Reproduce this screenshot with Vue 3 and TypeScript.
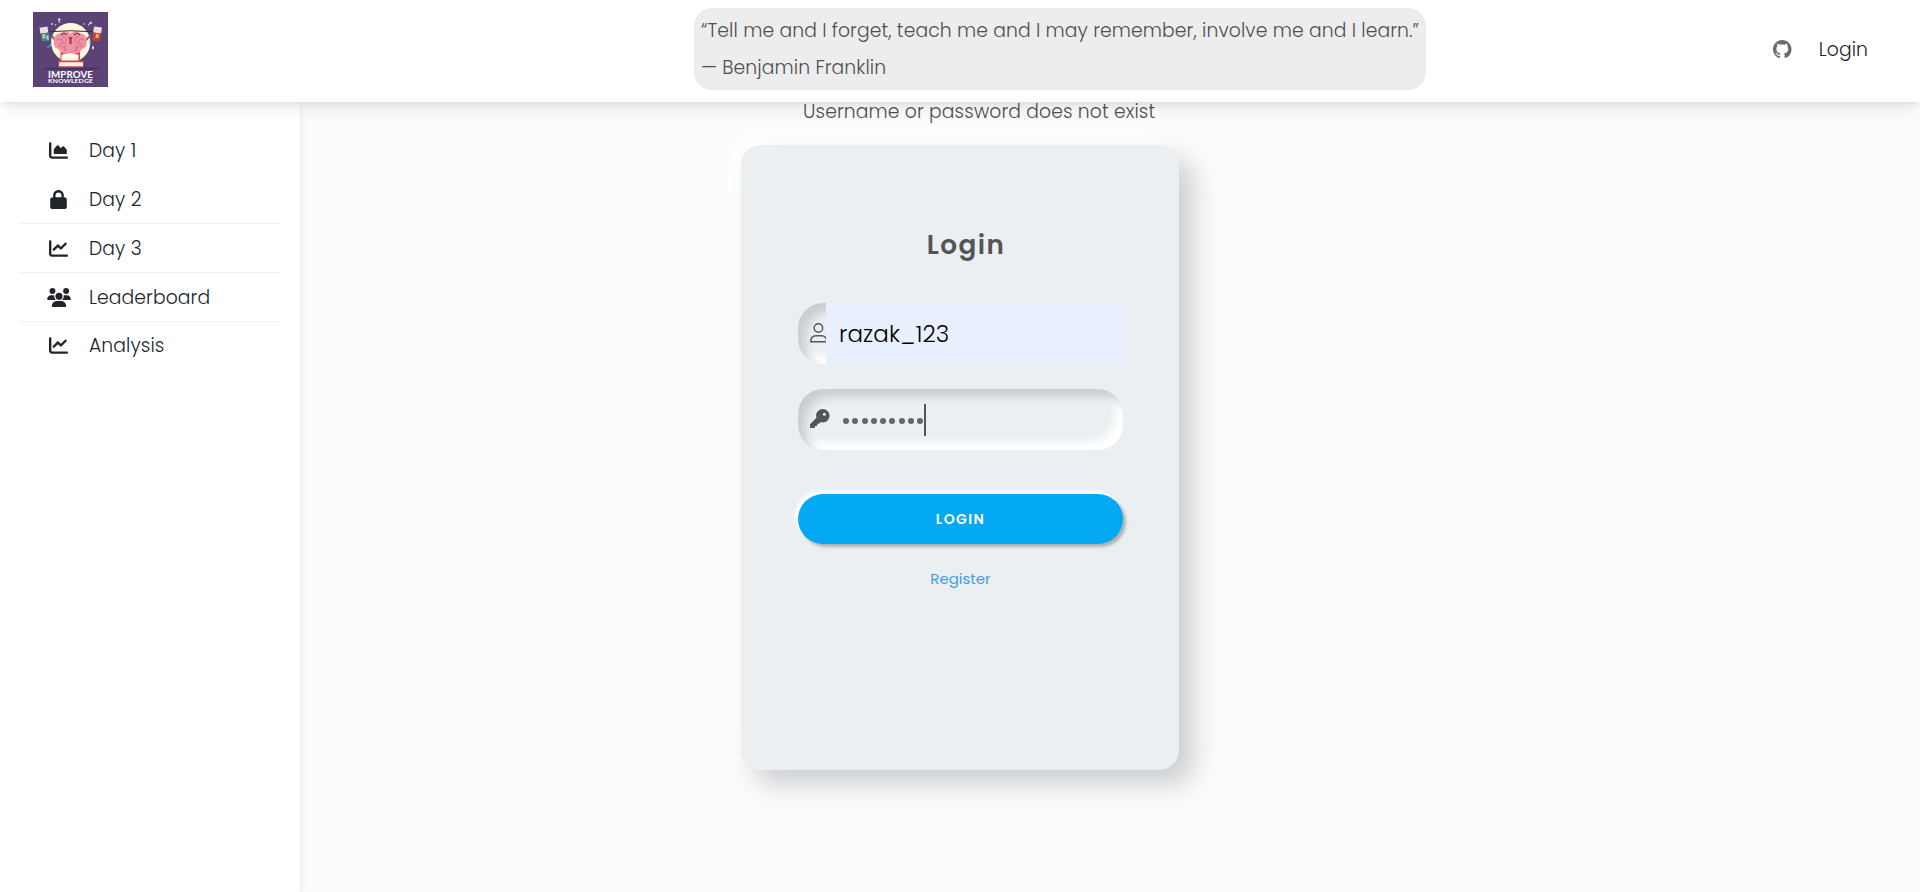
<script setup lang="ts">
interface NavItem {
  label: string
  box: string
  width: number
  path: string
  divider: boolean
}

const axis =
  'M64 64c0-17.7-14.3-32-32-32S0 46.3 0 64V400c0 44.2 35.8 80 80 80H480c17.7 0 32-14.3 32-32s-14.3-32-32-32H80c-8.8 0-16-7.2-16-16V64z'
const line =
  axis +
  'm406.6 86.6c12.5-12.5 12.5-32.8 0-45.3s-32.8-12.5-45.3 0L320 210.7l-57.4-57.4c-12.5-12.5-32.8-12.5-45.3 0l-112 112c-12.5 12.5-12.5 32.8 0 45.3s32.8 12.5 45.3 0L240 221.3l57.4 57.4c12.5 12.5 32.8 12.5 45.3 0l128-128z'
const area =
  axis +
  'm96 288H448c17.7 0 32-14.3 32-32V251.8c0-7.6-2.7-15-7.7-20.8l-65.8-76.8c-12.1-14.2-33.7-15-46.9-1.8l-21 21c-10 10-26.4 9.2-35.4-1.6l-39.2-47c-12.6-15.1-35.7-15.4-48.7-.6L135.9 215c-5.1 5.8-7.9 13.3-7.9 21.1v84c0 17.7 14.3 32 32 32z'
const lock =
  'M144 144v48H304V144c0-44.2-35.8-80-80-80s-80 35.8-80 80zM80 192V144C80 64.5 144.5 0 224 0s144 64.5 144 144v48h16c35.3 0 64 28.7 64 64V448c0 35.3-28.7 64-64 64H64c-35.3 0-64-28.7-64-64V256c0-35.3 28.7-64 64-64H80z'
const users =
  'M144 0a80 80 0 1 1 0 160A80 80 0 1 1 144 0zM512 0a80 80 0 1 1 0 160A80 80 0 1 1 512 0zM0 298.7C0 239.8 47.8 192 106.7 192h42.7c15.9 0 31 3.5 44.6 9.7c-1.3 7.2-1.9 14.7-1.9 22.3c0 38.2 16.8 72.5 43.3 96c-.2 0-.4 0-.7 0H21.3C9.6 320 0 310.4 0 298.7zM405.3 320c-.2 0-.4 0-.7 0c26.6-23.5 43.3-57.8 43.3-96c0-7.6-.7-15-1.9-22.3c13.6-6.3 28.7-9.7 44.6-9.7h42.7C592.2 192 640 239.8 640 298.7c0 11.8-9.6 21.3-21.3 21.3H405.3zM224 224a96 96 0 1 1 192 0 96 96 0 1 1 -192 0zM128 485.3C128 411.7 187.7 352 261.3 352H378.7C452.3 352 512 411.7 512 485.3c0 14.7-11.9 26.7-26.7 26.7H154.7c-14.7 0-26.7-11.9-26.7-26.7z'

const items: NavItem[] = [
  { label: 'Day 1', box: '0 0 512 512', width: 19, path: area, divider: false },
  { label: 'Day 2', box: '0 0 448 512', width: 17, path: lock, divider: true },
  { label: 'Day 3', box: '0 0 512 512', width: 19, path: line, divider: true },
  { label: 'Leaderboard', box: '0 0 640 512', width: 24, path: users, divider: true },
  { label: 'Analysis', box: '0 0 512 512', width: 19, path: line, divider: false },
]

const maskedLength = 9
</script>

<template>
  <div class="page">
    <header class="topbar">
      <svg class="logo" viewBox="0 0 75 75" width="75" height="75" role="img" aria-label="Improve Knowledge">
        <rect width="75" height="75" fill="#5c4376" />
        <ellipse cx="38" cy="56.5" rx="29" ry="1.2" fill="#463160" />
        <circle cx="37.7" cy="30.5" r="19.6" fill="#fff6e2" />
        <g fill="#d9cfe6">
          <circle cx="19" cy="12" r="1" /><circle cx="22.5" cy="13" r=".8" />
          <path d="M25 6.500h2.500v2h-.8v2.500h-1v-2.500H25z" />
          <path d="M55 13l2-3 2-.500 0 2-2 .500-1.500 2z" /><circle cx="51" cy="12" r=".8" />
          <rect x="59" y="34" width="2" height="3.500" rx="1" />
        </g>
        <path d="M14 35h2M17 32v3M57 28v4" stroke="#4fc0cf" stroke-width="1.200" />
        <path d="M19 24l3 4M57 24l-4 4" stroke="#c04b50" stroke-width="2" stroke-linecap="round" />
        <path d="M27.500 40v10h19.500V40z" fill="#d94b45" />
        <path d="M28.500 43q9-4 17 0v6h-17z" fill="#fffaf0" />
        <path d="M37.500 22c-3-3.500-8-3-10.500-.500-4 0-6.500 4-5.500 7-2 4 1 8 4 8.500 2 4.500 8 5.500 12 3.500 4 2 9.500 1 11.500-3.500 4-1 6-5 4-8.500 1-4-2-7-5.500-7-2-2.500-7-3-10 .500z" fill="#f292a6" />
        <path d="M24 28q3-3 5 0t-3 4M29 25q4-1 4 3t-4 3M25 35q4-3 6 1t3 3M33 33q-3 3-1 6M51 28q-3-3-5 0t3 4M46 25q-4-1-4 3t4 3M50 35q-4-3-6 1t-3 3M42 33q3 3 1 6" fill="none" stroke="#d0647d" stroke-width=".8" />
        <path d="M28 23q3-3 6 0M41 23q3-3 6 0" fill="none" stroke="#67243d" stroke-width="1.100" />
        <path d="M35.500 25h4l-.8 3v4h-2.400v-4z" fill="#b43d4d" />
        <path d="M11 20Q37 17.500 65 20" fill="none" stroke="#3c2a3c" stroke-width="1" />
        <g transform="rotate(-8 12 22)">
          <rect x="7.500" y="15" width="8" height="6" fill="#e8dfe6" />
          <rect x="8" y="21" width="8" height="8" fill="#348e8d" />
          <path d="M9 22h3v4H9z" fill="#f0b36a" /><path d="M13 24h2v4h-2z" fill="#b6d6c5" />
        </g>
        <g transform="rotate(8 64 22)">
          <rect x="60" y="15" width="8" height="6" fill="#e8dfe6" />
          <rect x="60" y="21" width="8" height="8" fill="#b94635" />
          <path d="M63 22h3v4h-3z" fill="#f3ab56" />
        </g>
        <rect x="25" y="48.500" width="25.500" height="7" rx="1" fill="#cf4842" />
        <path d="M26.500 50.200h23.500v4H26z" fill="#f6f0ed" />
        <text class="logo-top" x="15" y="65.800" textLength="45" lengthAdjust="spacingAndGlyphs">IMPROVE</text>
        <text class="logo-bottom" x="15" y="71" textLength="45" lengthAdjust="spacingAndGlyphs">KNOWLEDGE</text>
      </svg>

      <blockquote class="quote">
        <div>“Tell me and I forget, teach me and I may remember, involve me and I learn.”</div>
        <div>— Benjamin Franklin</div>
      </blockquote>

      <nav class="account">
        <svg class="github" viewBox="0 0 16 16" width="18.500" height="18.500">
          <path d="M8 0C3.580 0 0 3.580 0 8c0 3.540 2.290 6.530 5.470 7.590.4.070.55-.17.55-.38 0-.19-.01-.82-.01-1.490-2.010.37-2.530-.49-2.690-.94-.09-.23-.48-.94-.82-1.130-.28-.15-.68-.52-.01-.53.63-.01 1.080.58 1.230.82.72 1.210 1.870.87 2.330.66.07-.52.28-.87.51-1.070-1.780-.2-3.640-.89-3.640-3.950 0-.87.31-1.590.82-2.150-.08-.2-.36-1.020.08-2.120 0 0 .67-.21 2.200.82.64-.18 1.320-.27 2-.27s1.360.09 2 .27c1.530-1.040 2.200-.82 2.200-.82.44 1.100.16 1.920.08 2.120.51.56.82 1.270.82 2.150 0 3.070-1.870 3.750-3.650 3.950.29.25.54.73.54 1.480 0 1.070-.01 1.930-.01 2.200 0 .21.15.46.55.38A8.010 8.010 0 0 0 16 8c0-4.420-3.580-8-8-8z" />
        </svg>
        <a class="login-link">Login</a>
      </nav>
    </header>

    <div class="body">
      <aside class="sidebar">
        <a v-for="item in items" :key="item.label" class="nav-item" :class="{ divided: item.divider }">
          <span class="nav-icon">
            <svg :viewBox="item.box" :width="item.width" height="19"><path :d="item.path" /></svg>
          </span>
          <span>{{ item.label }}</span>
        </a>
      </aside>

      <main class="content">
        <div class="message">Username or password does not exist</div>
        <form class="card" @submit.prevent>
          <h1 class="title">Login</h1>
          <div class="field">
            <svg class="user-icon" viewBox="0 0 19 20" width="19" height="20">
              <circle cx="8.400" cy="5" r="4.300" />
              <path d="M.8 18.800c0-3.800 1.800-6 5.200-6h5.500c3.400 0 5.200 2.200 5.200 6z" />
            </svg>
            <div class="autofill">razak_123</div>
          </div>
          <div class="field password">
            <svg class="key-icon" viewBox="0 0 512 512" width="19.500" height="19.500">
              <path d="M336 352c97.200 0 176-78.800 176-176S433.200 0 336 0S160 78.800 160 176c0 18.700 2.900 36.800 8.300 53.700L7 391c-4.500 4.500-7 10.600-7 17v80c0 13.300 10.700 24 24 24h80c13.300 0 24-10.700 24-24V448h40c13.300 0 24-10.700 24-24V384h40c6.400 0 12.500-2.500 17-7l33.300-33.300c16.900 5.400 35 8.300 53.700 8.300zM376 96a40 40 0 1 1 0 80 40 40 0 1 1 0-80z" />
            </svg>
            <div class="dots"><i v-for="n in maskedLength" :key="n" /></div>
            <span class="caret" />
          </div>
          <button class="submit">LOGIN</button>
          <a class="register">Register</a>
        </form>
      </main>
    </div>
  </div>
</template>

<style>
body {
  margin: 0;
  overflow: hidden;
  background: #fbfbfb;
}
</style>

<style scoped>
.page {
  height: 892px;
  display: flex;
  flex-direction: column;
  font-family: Poppins, Inter, 'Liberation Sans', sans-serif;
  font-size: 18.75px;
  font-weight: 300;
  letter-spacing: 0.1px;
  color: #212529;
}

.topbar {
  position: relative;
  z-index: 2;
  box-sizing: border-box;
  flex: none;
  height: 102px;
  padding: 0 52px 0 33px;
  display: flex;
  align-items: center;
  background: #fff;
  box-shadow: 0 10px 15px -3px rgba(0, 0, 0, 0.07), 0 4px 6px -2px rgba(0, 0, 0, 0.07);
}

.logo {
  flex: none;
  margin-bottom: 3px;
}

.logo text {
  fill: #fff;
  font-family: Lato, sans-serif;
  font-weight: 700;
}

.logo-top {
  font-size: 9.5px;
}

.logo-bottom {
  font-size: 6.3px;
}

.quote {
  box-sizing: border-box;
  width: 732px;
  height: 82px;
  margin: 0 0 4px 586px;
  padding: 4px 7px;
  border-radius: 18px;
  background: #ededed;
  color: #4f4f4f;
  line-height: 37px;
  white-space: nowrap;
}

.account {
  margin-left: auto;
  padding-bottom: 4px;
  display: flex;
  align-items: center;
  gap: 27px;
}

.github {
  fill: #6c6c6c;
}

.body {
  flex: 1;
  display: flex;
}

.sidebar {
  flex: none;
  box-sizing: border-box;
  width: 300px;
  padding: 24.4px 20px 0;
  background: #fff;
  box-shadow: 0 2px 5px rgba(0, 0, 0, 0.05), 0 2px 10px rgba(0, 0, 0, 0.05);
}

.nav-item {
  box-sizing: border-box;
  height: 48.8px;
  padding: 1px 0 0 25.5px;
  display: flex;
  align-items: center;
  gap: 17.5px;
  border-bottom: 1px solid transparent;
}

.nav-item.divided {
  border-bottom-color: #f1f1f1;
}

.nav-icon {
  width: 26px;
  height: 19px;
  display: flex;
  justify-content: center;
  fill: #212529;
}

.content {
  width: 438px;
  margin-left: 441px;
}

.message {
  height: 19px;
  margin: 0 0 24px 62px;
  line-height: 19px;
  white-space: nowrap;
  color: #4f4f4f;
}

.card {
  box-sizing: border-box;
  height: 625px;
  padding: 80px 56px 0 57px;
  display: flex;
  flex-direction: column;
  border-radius: 20px;
  background: #ebeff2;
  box-shadow: 14px 14px 26px #cbced1, -14px -14px 26px #fff;
}

.title {
  margin: 0 0 38px;
  padding-left: 11px;
  font-size: 26.25px;
  font-weight: 600;
  line-height: 40px;
  letter-spacing: 1.5px;
  text-align: center;
  color: #555;
}

.field {
  flex: none;
  height: 61px;
  margin-bottom: 25px;
  display: flex;
  align-items: center;
  border-radius: 25px;
  box-shadow: inset 8px 8px 8px #cbced1, inset -8px -8px 8px #fff;
}

.user-icon {
  flex: none;
  margin: 0 -3px 2px 12px;
  fill: none;
  stroke: #555;
  stroke-width: 1.4;
}

.autofill {
  position: relative;
  flex: none;
  box-sizing: border-box;
  width: 298px;
  height: 61px;
  padding: 1px 0 0 13px;
  background: #e8f0fe;
  color: #000;
  font-size: 23px;
  line-height: 61px;
}

.password {
  margin-bottom: 44px;
}

.key-icon {
  margin: 0 0 2px 12px;
  fill: #555;
}

.dots {
  margin-left: 13.5px;
  padding-top: 2px;
  display: flex;
  gap: 3.25px;
}

.dots i {
  width: 6px;
  height: 6px;
  border-radius: 50%;
  background: #666;
}

.caret {
  width: 2px;
  height: 32px;
  margin-left: 1px;
  background: #555;
}

.submit {
  flex: none;
  height: 50px;
  padding: 0;
  border: 0;
  border-radius: 25px;
  background: #03a9f4;
  box-shadow: 3px 3px 3px #b1b1b1, -3px -3px 3px #fff;
  color: #fff;
  font: 600 14px/50px Poppins, Inter, sans-serif;
  letter-spacing: 1.4px;
}

.register {
  margin-top: 23px;
  align-self: center;
  line-height: 24px;
  font-size: 15px;
  font-weight: 400;
  letter-spacing: 0;
  color: #3a9fe8;
}
</style>
